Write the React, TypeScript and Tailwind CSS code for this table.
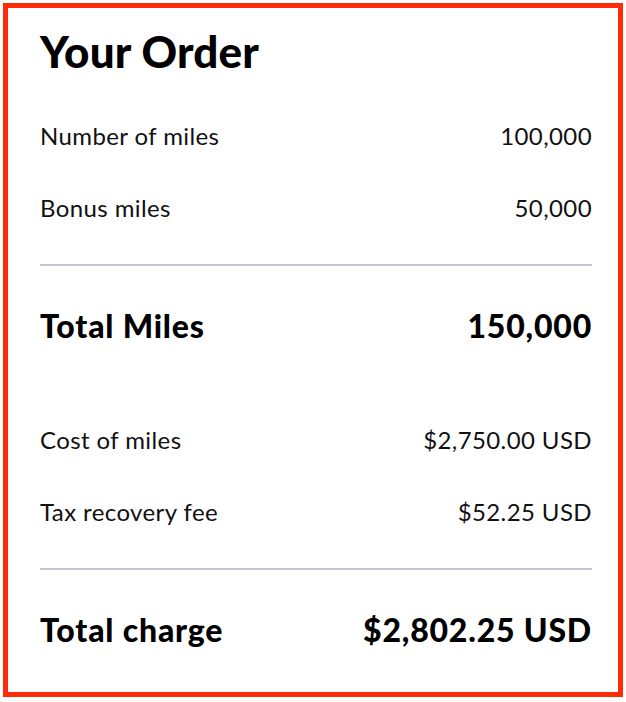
import React from "react";

const Row = ({ label, value }: { label: string; value: string }) => (
  <div className="flex h-[72px] items-center justify-between text-[24px] leading-none tracking-[0.4px] text-[#111]">
    <span>{label}</span>
    <span>{value}</span>
  </div>
);

const TotalRow = ({ label, value }: { label: string; value: string }) => (
  <div className="flex h-[120px] items-center justify-between text-[32px] font-black leading-none tracking-[0.8px] text-black">
    <span>{label}</span>
    <span>{value}</span>
  </div>
);

export default function App() {
  return (
    <div className="min-h-[702px] w-[626px] bg-white pl-[3px] pt-[3px]" style={{ fontFamily: "Lato, 'Noto Sans', sans-serif" }}>
      <div className="h-[694px] w-[620px] border-[5px] border-[#ff2b06] pl-[32px] pr-[26px]">
        <h1 className="h-[92px] pt-[21px] text-[44px] font-black leading-[44px] tracking-[0.2px] text-black">Your Order</h1>
        <Row label="Number of miles" value="100,000" />
        <Row label="Bonus miles" value="50,000" />
        <div className="mt-[20px] h-[2px] bg-[#c3c9d0]" />
        <TotalRow label="Total Miles" value="150,000" />
        <div className="h-[18px]" />
        <Row label="Cost of miles" value="$2,750.00 USD" />
        <Row label="Tax recovery fee" value="$52.25 USD" />
        <div className="mt-[20px] h-[2px] bg-[#c3c9d0]" />
        <TotalRow label="Total charge" value="$2,802.25 USD" />
      </div>
    </div>
  );
}
